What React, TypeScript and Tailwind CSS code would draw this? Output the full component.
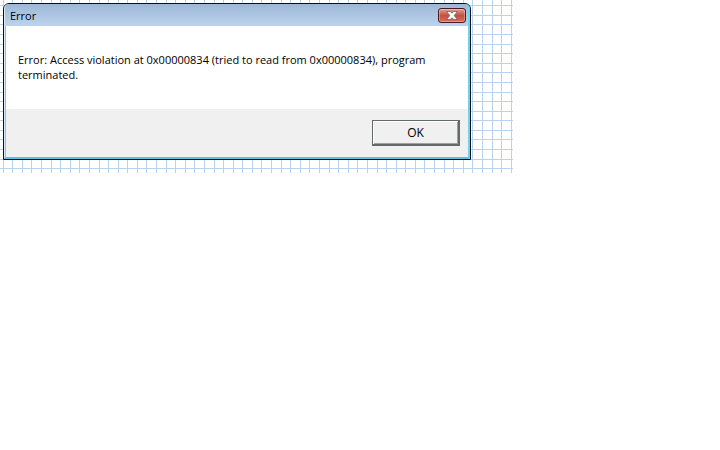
import { useState } from "react";

const GRID_STEP = 9.585;
const columns = Array.from({ length: 54 }, (_, i) => Math.floor(3.2 + i * GRID_STEP));
const rows = Array.from({ length: 18 }, (_, i) => Math.floor(5.8 + i * GRID_STEP));

function GridPaper() {
  return (
    <svg className="absolute inset-0 h-full w-full" shapeRendering="crispEdges" aria-hidden>
      {columns.map((x) => (
        <rect key={`c${x}`} x={x} y="0" width="1" height="100%" fill="#b9d3ee" />
      ))}
      {rows.map((y) => (
        <rect key={`r${y}`} x="0" y={y} width="100%" height="1" fill="#b9d3ee" />
      ))}
    </svg>
  );
}

function CloseIcon() {
  return (
    <svg width="12" height="9" viewBox="0 0 12 9" aria-hidden>
      <path
        d="M.6.5h3.6L6 2.2 7.8.5h3.6L8.2 4.5l3.2 4H7.8L6 6.8 4.2 8.5H.6l3.2-4z"
        fill="#fff"
        stroke="#6b5560"
        strokeWidth="0.7"
        strokeLinejoin="round"
      />
    </svg>
  );
}

type ErrorDialogProps = {
  title: string;
  message: string;
  onClose: () => void;
};

function ErrorDialog({ title, message, onClose }: ErrorDialogProps) {
  return (
    <div
      className="relative rounded-t-md border border-[#05121c] bg-[#b4cbe6] text-black"
      role="alertdialog"
      aria-labelledby="dialog-title"
      aria-describedby="dialog-message"
    >
      <div className="overflow-hidden rounded-t-[5px] border-r-2 border-b-2 border-l border-r-[#6fd3ee] border-b-[#5fc0de] border-l-[#d9ecf8]">
        <header className="flex items-start justify-between bg-linear-to-b from-[#9db8d6] to-[#bdd3ed] pt-1 pr-[2px] pb-[2px] pl-[5px]">
          <h1 className="text-[11px] leading-4" id="dialog-title">
            {title}
          </h1>
          <button
            className="flex h-[15px] w-7 items-center justify-center rounded-[3px] border border-[#4c1a22] bg-linear-to-b from-[#dfa093] via-[#c4503f] via-50% to-[#d4705a] shadow-[inset_0_0_0_1px_rgba(255,255,255,0.3)]"
            type="button"
            onClick={onClose}
            aria-label="Close"
          >
            <CloseIcon />
          </button>
        </header>
        <div className="border-l border-[#a9b8c8]">
          <p className="bg-white px-3 pt-[26px] pb-[27px] text-[11px] leading-[15px]" id="dialog-message">
            {message}
          </p>
          <footer className="flex justify-end bg-[#f0f0f0] px-2 pt-[11px] pb-[11px]">
            <button
              className="h-[26px] w-[88px] border border-r-2 border-b-2 border-[#646a69] bg-[#f0f0f0] text-[12px] leading-4 shadow-[inset_1px_1px_0_#fff,inset_-1px_-1px_0_#a0a0a0]"
              type="button"
              onClick={onClose}
            >
              OK
            </button>
          </footer>
        </div>
      </div>
    </div>
  );
}

export default function App() {
  const [open, setOpen] = useState(true);

  return (
    <main className="min-h-screen bg-white font-['Open_Sans','Noto_Sans',sans-serif]">
      <div className="relative max-w-[513px] pt-[3px] pr-[42px] pb-[13px] pl-[3px]">
        <GridPaper />
        {open ? (
          <ErrorDialog
            title="Error"
            message="Error: Access violation at 0x00000834 (tried to read from 0x00000834), program terminated."
            onClose={() => setOpen(false)}
          />
        ) : null}
      </div>
    </main>
  );
}
